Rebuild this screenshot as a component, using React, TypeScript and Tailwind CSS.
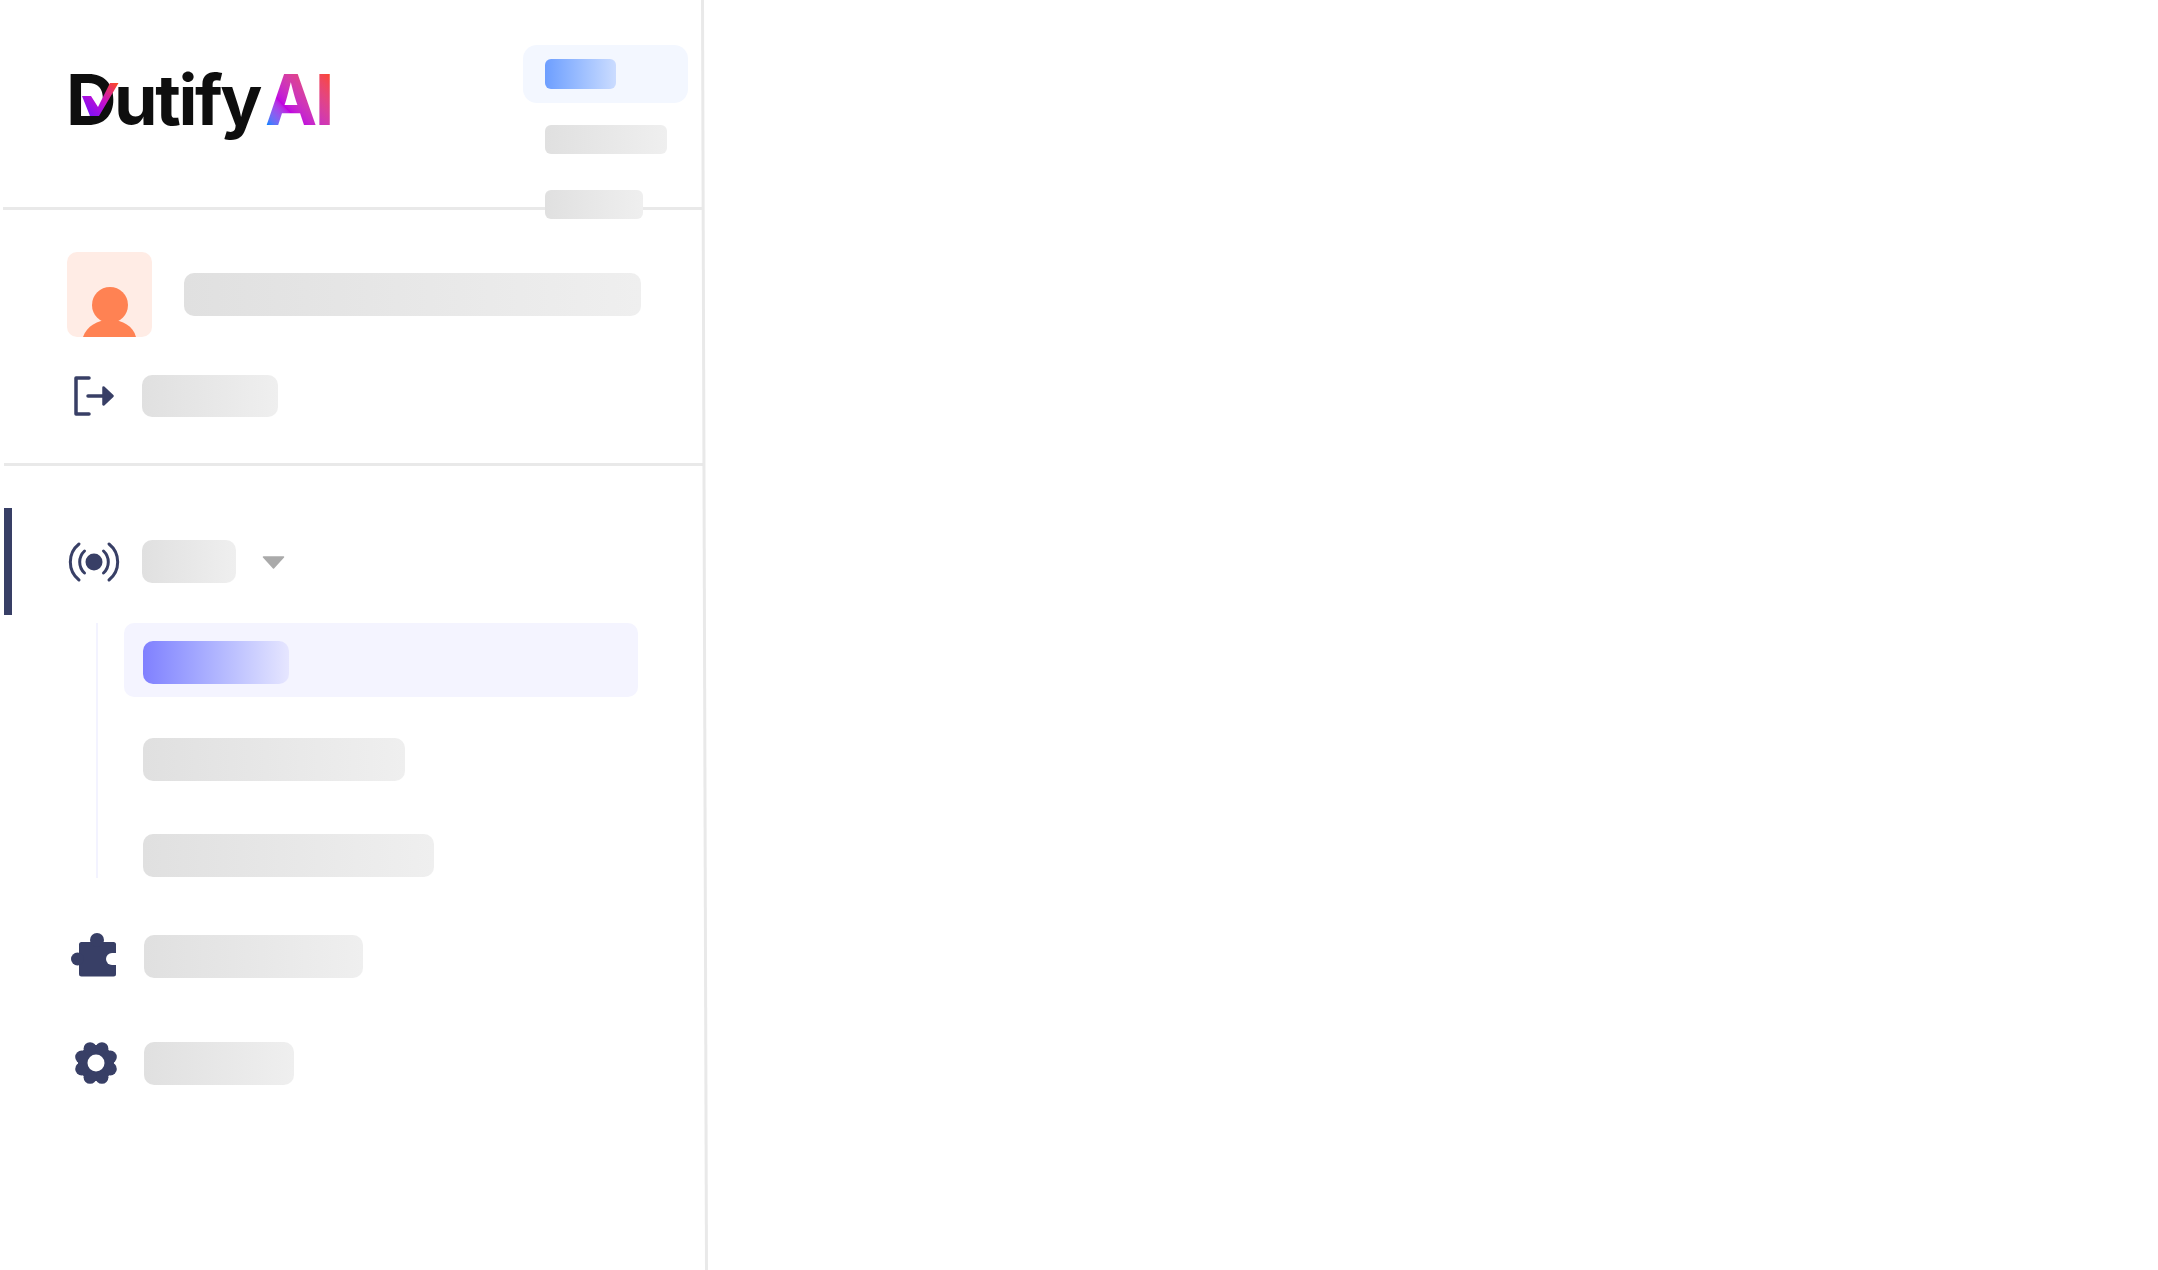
const NAVY = "#383f66";

function Bar({ className }: { className: string }) {
  return <div className={`shrink-0 bg-linear-to-r from-[#e0e0e0] to-[#efefef] ${className}`} />;
}

function Check() {
  return (
    <svg width="52" height="42" viewBox="0 0 52 42" className="block">
      <defs>
        <linearGradient id="chk" x1="0" y1="1" x2="1" y2="0">
          <stop offset="0" stopColor="#6a10ff" />
          <stop offset="0.5" stopColor="#c40fd0" />
          <stop offset="1" stopColor="#ff4a1c" />
        </linearGradient>
      </defs>
      <path d="M3 13H12L19 24L31 0H39.5L20 33H11Z" fill="url(#chk)" />
    </svg>
  );
}

function Logo() {
  return (
    <div className="relative flex items-baseline font-['Inter',sans-serif] text-[70px] leading-[70px] font-bold tracking-[-0.035em] text-[#0e0e0e]">
      <span>Dutify</span>
      <span className="ml-[5px] bg-linear-to-tr from-[#1080ff] from-10% via-[#c000e0] via-35% to-[#ff4510] to-95% bg-clip-text text-transparent">
        AI
      </span>
      <div className="absolute left-[13px] top-[18px]">
        <Check />
      </div>
    </div>
  );
}

function Person() {
  return (
    <svg width="85" height="85" viewBox="0 0 85 85" className="block">
      <circle cx="43" cy="53" r="18" fill="#ff8253" />
      <path d="M16 85C20 74 30 68 43 68C56 68 66 74 69 85Z" fill="#ff8253" />
    </svg>
  );
}

function Logout() {
  return (
    <svg width="40" height="40" viewBox="0 0 40 40" className="block shrink-0" fill="none">
      <path d="M15 2H2V38H15" stroke={NAVY} strokeWidth="3.5" strokeLinecap="round" strokeLinejoin="round" />
      <path d="M14 20H30" stroke={NAVY} strokeWidth="3.5" strokeLinecap="round" />
      <path d="M29.5 11.5L38.5 20L29.5 28.5Z" fill={NAVY} stroke={NAVY} strokeWidth="2.5" strokeLinejoin="round" />
    </svg>
  );
}

function Broadcast() {
  return (
    <svg width="56" height="44" viewBox="0 0 56 44" className="block shrink-0" fill="none">
      <circle cx="28" cy="22" r="8.5" fill={NAVY} />
      <g stroke={NAVY} strokeWidth="3" strokeLinecap="round">
        <path d="M18.5 11A15 15 0 0 0 18.5 33" />
        <path d="M37.5 11A15 15 0 0 1 37.5 33" />
        <path d="M13 4A23 23 0 0 0 13 40" />
        <path d="M43 4A23 23 0 0 1 43 40" />
      </g>
    </svg>
  );
}

function Caret() {
  return (
    <svg width="23" height="13" viewBox="0 0 23 13" className="block shrink-0">
      <path d="M1.5 1H21.5L11.5 12Z" fill="#aaaaaa" stroke="#aaaaaa" strokeWidth="1.5" strokeLinejoin="round" />
    </svg>
  );
}

function Puzzle() {
  return (
    <svg width="46" height="45" viewBox="0 0 46 45" className="block shrink-0">
      <rect x="8" y="9" width="37" height="34.5" rx="2.5" fill={NAVY} />
      <circle cx="26" cy="7" r="7" fill={NAVY} />
      <circle cx="6.5" cy="26" r="6.5" fill={NAVY} />
      <circle cx="41" cy="26" r="6" fill="#ffffff" />
      <rect x="41" y="20" width="6" height="12" fill="#ffffff" />
    </svg>
  );
}

function Gear() {
  const lobes = [22.5, 67.5, 112.5, 157.5, 202.5, 247.5, 292.5, 337.5];
  return (
    <svg width="44" height="44" viewBox="0 0 44 44" className="block shrink-0">
      <circle cx="22" cy="22" r="18" fill={NAVY} />
      {lobes.map((a) => (
        <circle
          key={a}
          cx={22 + 15.5 * Math.cos((a * Math.PI) / 180)}
          cy={22 + 15.5 * Math.sin((a * Math.PI) / 180)}
          r="6.5"
          fill={NAVY}
        />
      ))}
      <circle cx="22" cy="22" r="8.5" fill="#ffffff" />
    </svg>
  );
}

export default function App() {
  return (
    <div className="flex h-screen w-full overflow-hidden bg-white">
      <aside className="relative w-[701px] shrink-0">
        <header className="flex h-[207px] pl-[66px] pt-[65px]">
          <Logo />
        </header>

        <div className="absolute left-[523px] top-[45px] z-10 w-[165px]">
          <div className="flex h-[58px] items-center rounded-[14px] bg-[#f3f7ff] pl-[22px]">
            <div className="h-[30px] w-[71px] rounded-[6px] bg-linear-to-r from-[#6d9eff] to-[#cbdcff]" />
          </div>
          <div className="mt-[22px] pl-[22px]">
            <Bar className="h-[29px] w-[122px] rounded-[6px]" />
          </div>
          <div className="mt-[36px] pl-[22px]">
            <Bar className="h-[29px] w-[98px] rounded-[6px]" />
          </div>
        </div>

        <div className="ml-[3px] h-[3px] w-[700px] bg-[#e9e9e9]" />

        <section className="pt-[42px]">
          <div className="flex items-center pl-[67px]">
            <div className="h-[85px] w-[85px] shrink-0 overflow-hidden rounded-[10px] bg-[#ffece5]">
              <Person />
            </div>
            <Bar className="ml-[32px] h-[43px] w-[457px] rounded-[10px]" />
          </div>
          <div className="mt-[38px] flex items-center pl-[74px]">
            <Logout />
            <Bar className="ml-[28px] h-[42px] w-[136px] rounded-[10px]" />
          </div>
        </section>

        <div className="ml-[4px] mt-[46px] h-[3px] w-[700px] bg-[#e9e9e9]" />

        <nav className="pt-[42px]">
          <div className="flex h-[107px] items-center">
            <div className="ml-[4px] h-full w-[8px] bg-[#383f66]" />
            <div className="ml-[54px]">
              <Broadcast />
            </div>
            <Bar className="ml-[20px] h-[43px] w-[94px] rounded-[10px]" />
            <div className="ml-[26px] pt-[1px]">
              <Caret />
            </div>
          </div>

          <div className="ml-[96px] mt-[8px] h-[255px] border-l-2 border-[#f3f3ff] pl-[26px]">
            <div className="h-[74px] w-[514px] rounded-[10px] bg-[#f4f4ff] pl-[19px] pt-[18px]">
              <div className="h-[43px] w-[146px] rounded-[10px] bg-linear-to-r from-[#8080ff] to-[#e6e6ff]" />
            </div>
            <div className="pl-[19px] pt-[41px]">
              <Bar className="h-[43px] w-[262px] rounded-[10px]" />
              <Bar className="mt-[53px] h-[43px] w-[291px] rounded-[10px]" />
            </div>
          </div>

          <div className="mt-[55px] flex items-start pl-[71px]">
            <Puzzle />
            <Bar className="ml-[27px] mt-[2px] h-[43px] w-[219px] rounded-[10px]" />
          </div>
          <div className="mt-[63px] flex items-start pl-[74px]">
            <Gear />
            <Bar className="ml-[26px] mt-[1px] h-[43px] w-[150px] rounded-[10px]" />
          </div>
        </nav>
      </aside>
      <div className="h-full w-[3px] shrink-0 origin-top -rotate-[0.18deg] bg-[#e9e9e9]" />
      <main className="flex-1 bg-white" />
    </div>
  );
}
